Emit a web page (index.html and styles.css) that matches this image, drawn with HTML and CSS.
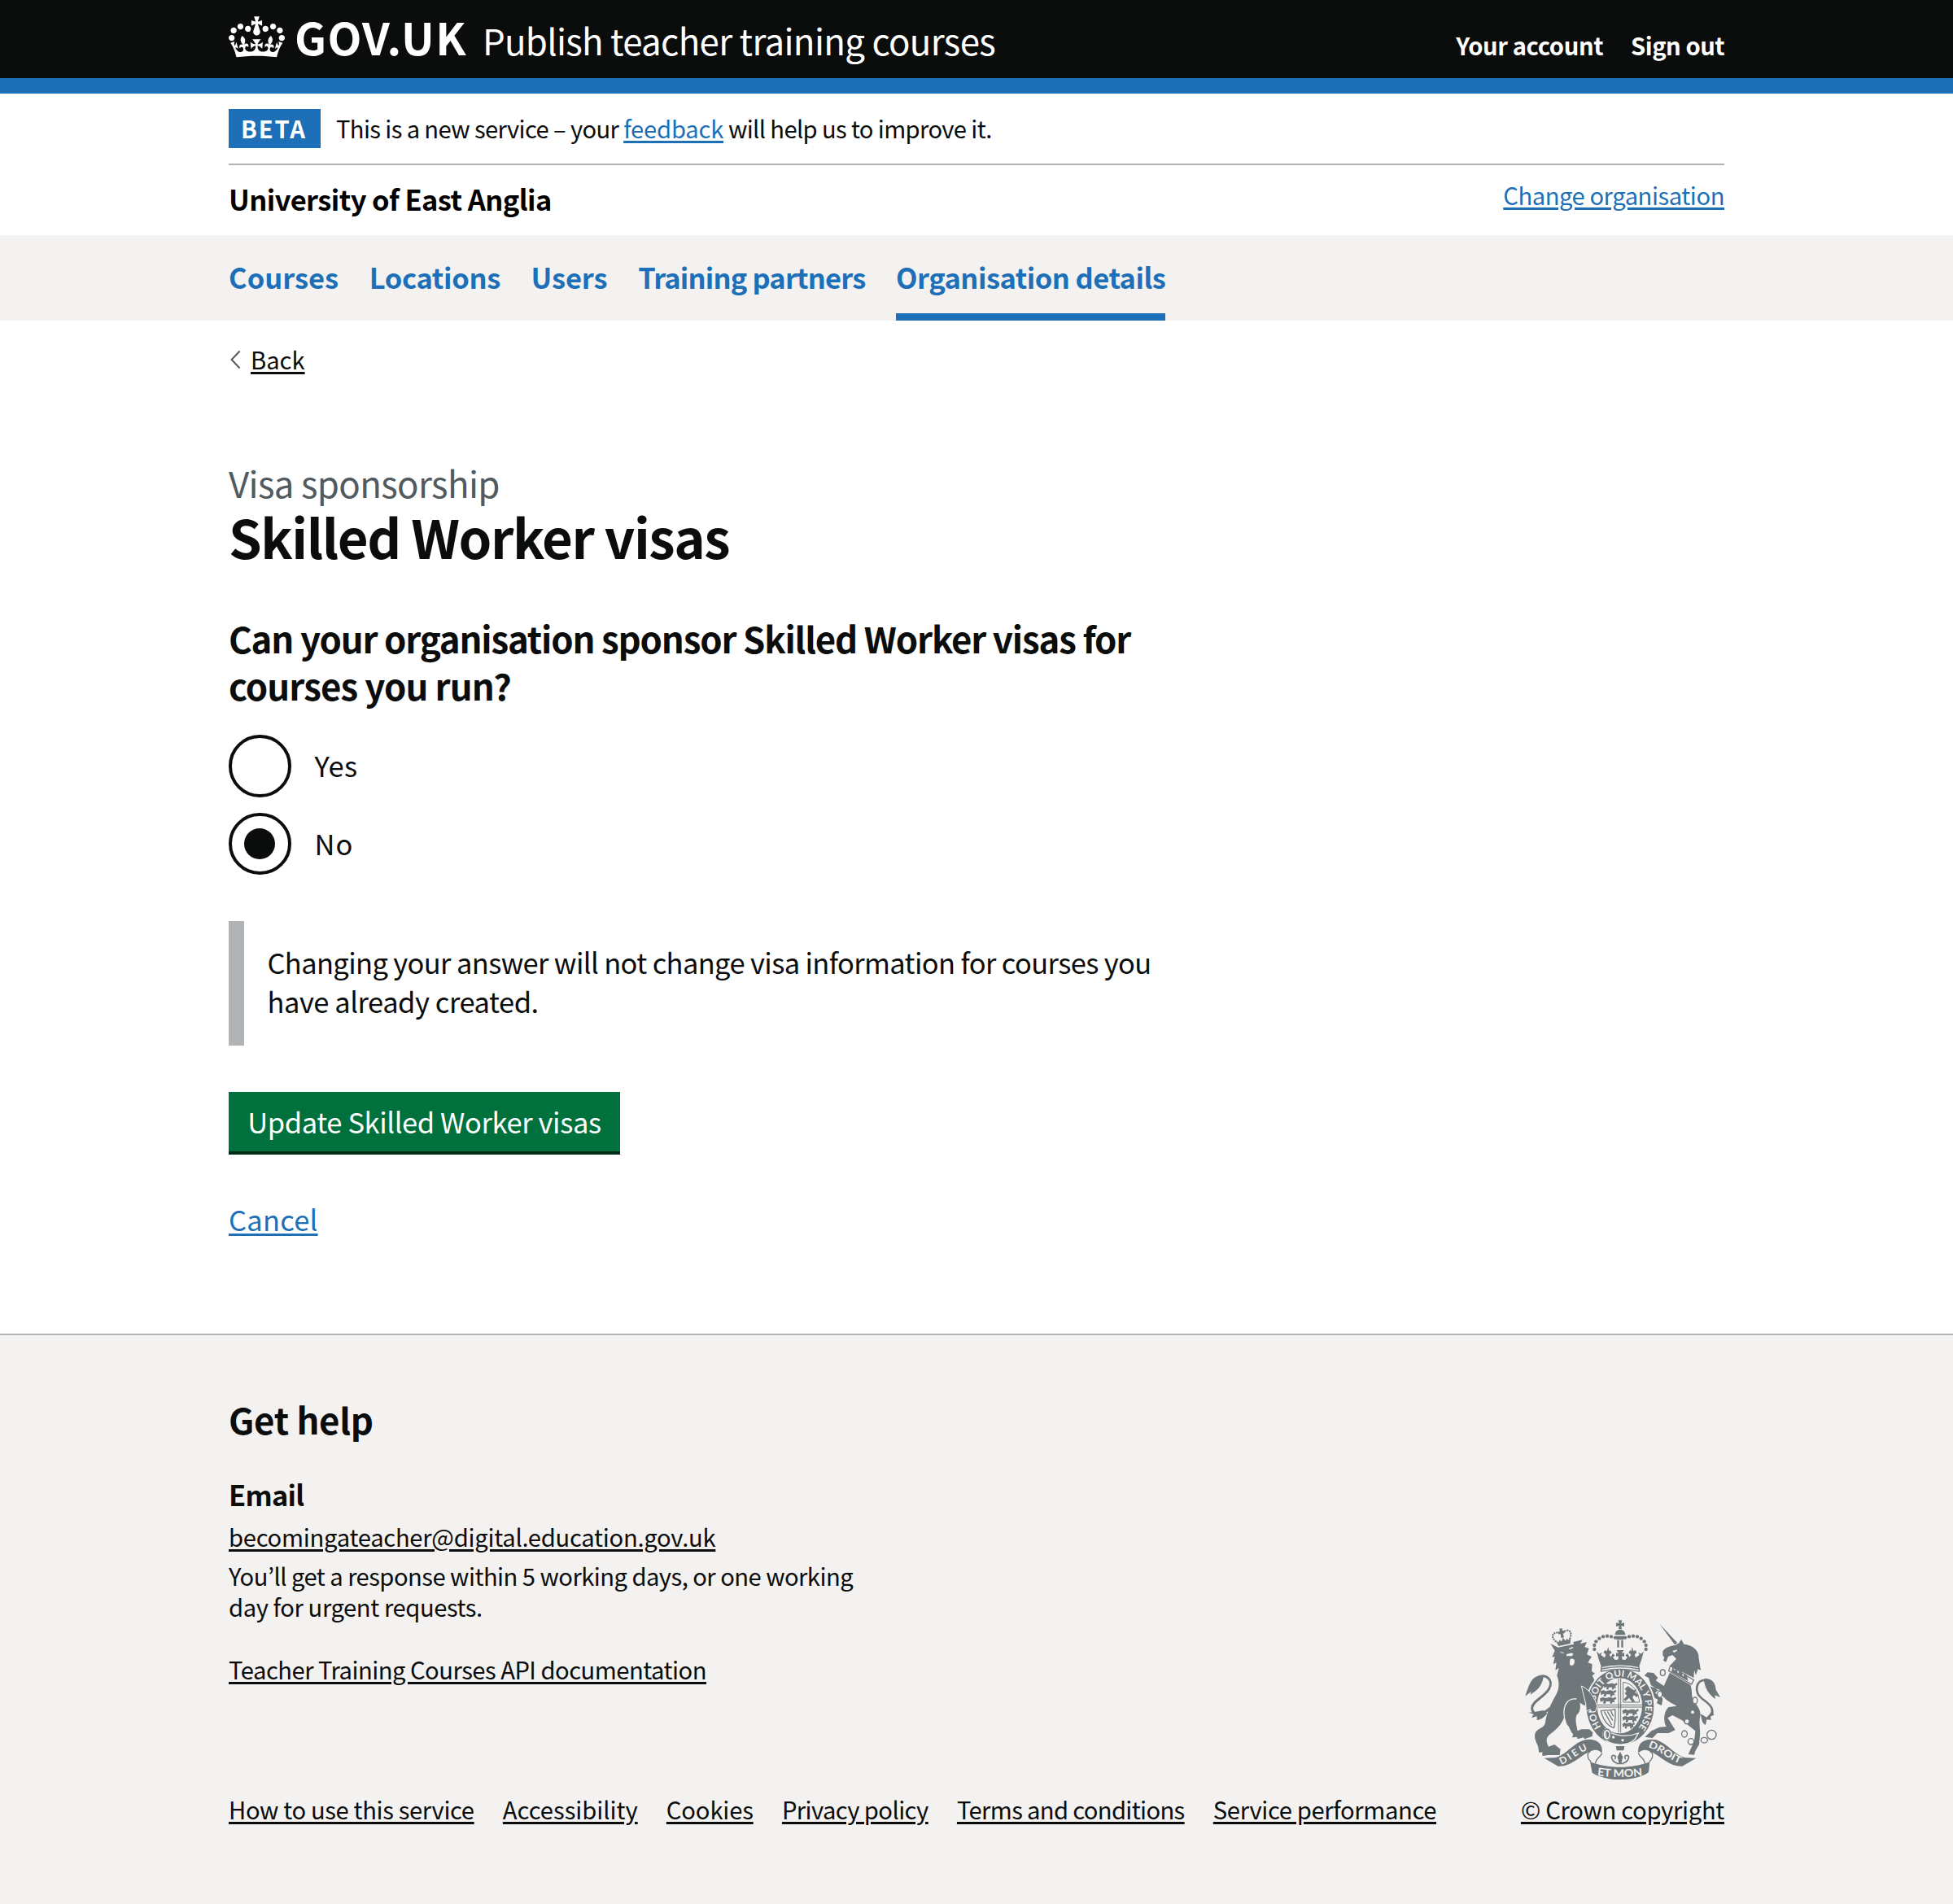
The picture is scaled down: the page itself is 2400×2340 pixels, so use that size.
FILE: index.html
```html
<!DOCTYPE html>
<html lang="en">
<head>
<meta charset="utf-8">
<title>Skilled Worker visas - Publish teacher training courses</title>
<link rel="stylesheet" href="styles.css">
</head>
<body>
<header class="header">
  <div class="container header-row">
    <svg class="crown" viewBox="0 0 132 97" aria-hidden="true"><path fill="#fff" d="M25 30.2c3.5 1.5 7.7-.2 9.1-3.7 1.5-3.6-.2-7.8-3.9-9.2-3.6-1.4-7.6.3-9.1 3.9-1.4 3.5.3 7.5 3.9 9zM9 39.5c3.6 1.5 7.8-.2 9.2-3.7 1.5-3.6-.2-7.8-3.9-9.1-3.6-1.5-7.6.2-9.1 3.8-1.4 3.5.3 7.5 3.8 9zM4.4 57.2c3.5 1.5 7.7-.2 9.1-3.8 1.5-3.6-.2-7.7-3.9-9.1-3.5-1.5-7.6.3-9.1 3.8-1.4 3.5.3 7.6 3.9 9.1zm38.3-21.4c3.5 1.5 7.7-.2 9.1-3.8 1.5-3.6-.2-7.7-3.9-9.1-3.6-1.5-7.6.3-9.1 3.8-1.3 3.6.4 7.7 3.9 9.1zm64.4-5.6c-3.6 1.5-7.8-.2-9.1-3.7-1.5-3.6.2-7.8 3.8-9.2 3.6-1.4 7.7.3 9.2 3.9 1.3 3.5-.4 7.5-3.9 9zm15.9 9.3c-3.6 1.5-7.7-.2-9.1-3.7-1.5-3.6.2-7.8 3.7-9.1 3.6-1.5 7.7.2 9.2 3.8 1.5 3.5-.3 7.5-3.8 9zm4.7 17.7c-3.6 1.5-7.8-.2-9.2-3.8-1.5-3.6.2-7.7 3.9-9.1 3.6-1.5 7.7.3 9.2 3.8 1.3 3.5-.4 7.6-3.9 9.1zM89.3 35.8c-3.6 1.5-7.8-.2-9.2-3.8-1.4-3.6.2-7.7 3.9-9.1 3.6-1.5 7.7.3 9.2 3.8 1.4 3.6-.3 7.7-3.9 9.1zM69.7 17.7l8.9 4.7V9.3l-8.9 2.8c-.2-.3-.5-.6-.9-.9L72.4 0H59.6l3.5 11.2c-.3.3-.6.5-.9.9l-8.8-2.8v13.1l8.8-4.7c.3.3.6.7.9.9l-5 15.4v.1c-.2.8-.4 1.6-.4 2.4 0 4.1 3.1 7.5 7 8.1h.2c.3 0 .7.1 1 .1.4 0 .7 0 1-.1h.2c4-.6 7.1-4.1 7.1-8.1 0-.8-.1-1.7-.4-2.4V34l-5.1-15.4c.4-.2.7-.6 1-.9zM66 92.8c16.9 0 32.8 1.1 47.1 3.2 4-16.9 8.9-26.7 14-33.5l-9.6-3.4c1 4.9 1.1 7.2 0 10.2-1.5-1.4-3-4.3-4.2-8.7L108.6 76c2.8-2 5-3.2 7.5-3.3-4.4 9.4-10 11.9-13.6 11.2-4.3-.8-6.3-4.6-5.6-7.9 1-4.7 5.7-5.9 8-.5 4.3-8.7-3-11.4-7.6-8.8 7.1-7.2 7.9-13.5 2.1-21.1-8 6.1-8.1 12.3-4.5 20.8-4.7-5.4-12.1-2.5-9.5 6.2 3.4-5.2 7.9-2 7.2 3.1-.6 4.3-6.4 7.8-13.5 7.2-10.3-.9-10.9-8-11.2-13.8 2.5-.5 7.1 1.8 11 7.3L80.2 60c-4.1 4.4-8 5.3-12.3 5.4 1.4-4.4 8-11.6 8-11.6H55.5s6.4 7.2 7.9 11.6c-4.2-.1-8-1-12.3-5.4l1.4 16.4c3.9-5.5 8.5-7.7 10.9-7.3-.3 5.8-.9 12.8-11.1 13.8-7.2.6-12.9-2.9-13.5-7.2-.7-5 3.8-8.3 7.1-3.1 2.7-8.7-4.6-11.6-9.4-6.2 3.7-8.5 3.6-14.7-4.6-20.8-5.8 7.6-5 13.9 2.2 21.1-4.7-2.6-11.9.1-7.7 8.8 2.3-5.5 7.1-4.2 8.1.5.7 3.3-1.3 7.1-5.7 7.9-3.5.7-9-1.8-13.5-11.2 2.5.1 4.7 1.3 7.5 3.3l-4.7-15.4c-1.2 4.4-2.7 7.2-4.3 8.7-1.1-3-.9-5.3 0-10.2l-9.5 3.4c5 6.9 9.9 16.7 14 33.5 14.8-2.1 30.8-3.2 47.7-3.2z"/></svg>
    <a class="logotype">GOV.UK</a>
    <a class="product">Publish teacher training courses</a>
    <nav class="account"><a class="your-account">Your account</a><a class="sign-out">Sign out</a></nav>
  </div>
</header>

<div class="container">
  <div class="phase">
    <strong class="tag">BETA</strong>
    <p class="phase-text">This is a new service – your <a class="link feedback">feedback</a><span class="phase-rest"> will help us to improve it.</span></p>
  </div>
  <div class="org">
    <p class="org-name">University of East Anglia</p>
    <a class="link change-org">Change organisation</a>
  </div>
</div>

<nav class="nav">
  <div class="container nav-row">
    <a class="nav-item courses">Courses</a>
    <a class="nav-item locations">Locations</a>
    <a class="nav-item users">Users</a>
    <a class="nav-item partners">Training partners</a>
    <a class="nav-item details current">Organisation details</a>
  </div>
</nav>

<main class="container main">
  <a class="back"><svg class="chevron" viewBox="0 0 14 24" aria-hidden="true"><path d="M12.6 1.5 2.6 12l10 10.500" fill="none" stroke="#505a5f" stroke-width="2"/></svg><span class="back-text">Back</span></a>
  <p class="caption">Visa sponsorship</p>
  <h1 class="title">Skilled Worker visas</h1>
  <h2 class="question"><span class="q1">Can your organisation sponsor Skilled Worker visas for</span><br><span class="q2">courses you run?</span></h2>
  <div class="radios">
    <label class="radio"><span class="ring"></span><span class="yes">Yes</span></label>
    <label class="radio"><span class="ring"><span class="dot"></span></span><span class="no">No</span></label>
  </div>
  <p class="inset"><span class="i1">Changing your answer will not change visa information for courses you</span><br><span class="i2">have already created.</span></p>
  <button class="button">Update Skilled Worker visas</button>
  <p class="cancel-row"><a class="link cancel">Cancel</a></p>
</main>

<footer class="footer">
  <div class="container footer-row">
    <div class="footer-main">
      <h2 class="help">Get help</h2>
      <h3 class="email">Email</h3>
      <p class="address"><a class="dark address-link">becomingateacher@digital.education.gov.uk</a></p>
      <p class="response"><span class="r1">You’ll get a response within 5 working days, or one working</span><br><span class="r2">day for urgent requests.</span></p>
      <p class="api"><a class="dark api-link">Teacher Training Courses API documentation</a></p>
      <div class="links">
        <a class="dark l-how">How to use this service</a>
        <a class="dark l-acc">Accessibility</a>
        <a class="dark l-cook">Cookies</a>
        <a class="dark l-priv">Privacy policy</a>
        <a class="dark l-terms">Terms and conditions</a>
        <a class="dark l-perf">Service performance</a>
      </div>
    </div>
    <div class="copyright">
      <svg class="crest" viewBox="72 60 720 594" aria-hidden="true">
        <defs>
          <path id="garter" d="M353 457A93 112 0 1 1 493 457"/>
          <path id="dieu" d="M206 596C240 584 268 552 316 536"/>
          <path id="mon" d="M338 636Q423 648 510 636"/>
          <path id="droit" d="M525 532C566 541 601 580 652 596"/>
          <path id="beast" d="M0 5l8-4 6 3 12-3 8 3 6-4 2 6-6 3 2 7-6-1-2 5-4-1 0-6-10 0-2 7-6-2 2-7-8 4z"/>
          <g id="crownhalf">
            <g class="d"><circle cx="404" cy="128" r="6"/><circle cx="390" cy="124" r="6.500"/><circle cx="375" cy="122" r="6.500"/><circle cx="360" cy="124" r="6.500"/><circle cx="346" cy="131" r="6.500"/><circle cx="334" cy="142" r="6.500"/><circle cx="328" cy="156" r="6.500"/><circle cx="328" cy="171" r="6.500"/></g>
            <path class="d" d="M424 232V208L404 210 396 200 404 194 396 186 388 200 383 190 392 184 386 174 382 178 379 162 374 178 366 174 362 184 370 190 366 202 352 192 356 182 346 188 336 178 344 208 354 236z"/>
          </g>
        </defs>
        <!-- lion -->
        <path class="s" stroke-width="9" d="M112 278C150 255 180 285 160 318C140 350 98 362 98 388C98 412 130 420 164 388"/>
        <path class="d" d="M140 274C98 258 88 300 73 344l22-18-3 12C118 322 136 304 140 274zM86 404l18 6-8 14 20-6 0 14c18-2 28-12 38-24l-14-12-34 6z"/>
        <path class="d" d="M166 150l16 26-10 24 10-2-6 28 12-6-4 28 13-8-7 28C198 290 200 312 188 336C170 368 152 402 147 440C146 458 122 462 113 474C102 490 112 512 120 528L124 552l12-2 0 14 22-3 42 0 3-22-22-17-22 8C150 512 148 500 162 486C188 466 212 445 217 416L226 446C240 462 240 476 250 484l-4 12 18-2 2 8 22-6 4 6 28-10 2-14-12-12-30 0-14 6C262 450 256 434 262 414C276 402 278 384 274 368l24 14 0 18 14-8 6 10 14-2 8-22-10-30-20-20 20-38-10-22 10-8-12-8 2-26-16-6 14-22-18-8 8-22-16-6 8-18L276 150 284 136 250 144 252 152 194 164z"/>
        <path class="l" stroke="none" d="M196 178l22 3-3 7-14-3zM232 166l22-8-4 10-16 6zM222 188l22-6 10 6-8 10-22 0zM236 208c6-8 20-6 21 6c0 20-18 24-22 12z"/>
        <path class="sl" stroke-width="4" d="M217 420C210 370 235 350 262 354"/>
        <g transform="rotate(-12 208 125)"><path class="d" d="M183 136l6 20h44l6-20-10 6-4-8-6 8-8-12-8 12-6-8-4 8zM205 94h10v10h7v9h-7v16h-10v-16h-7v-9h7z"/><g class="s" stroke-width="7" stroke-dasharray="0 9" stroke-linecap="round"><path d="M182 136C164 112 184 96 206 112"/><path d="M236 136C254 112 234 96 214 112"/></g></g>
        <!-- unicorn -->
        <path class="d" d="M567 76L634 148l-10 6zM626 156l14-8 8-14 10 18C690 154 714 178 712 198L720 248l-10-4-8 22-6-18-2 28L606 232l24-26-14-14-16 6-8 20-10-6 4-12-6-6 0-16C592 162 610 158 626 156z"/>
        <path class="l" stroke="none" d="M612 176l22-6 2 6-14 10z"/>
        <path class="l" d="M608 232L694 284l-8 16L602 250z"/>
        <path class="d" d="M612 254l4-18 8 14 6-8 6 18 8-12 6 6 4 18 8-12 6 6 6 22zM606 257L682 302C690 322 684 346 694 362C712 384 724 400 716 428C714 454 720 474 716 498l-2 24-14 24-4 14-22-2 12-26 10-22 4-38L650 432l-34-18-18 10 28 44-24 12-42 0-18 18-28-4 24-22 30-14 26-2C580 440 584 398 602 384l30-4C600 364 580 350 570 328L536 302l-8-26-16-8 12-12 22 2 16 18-8 10 30 20zM572 322l-42-16-6 20 10 16 28 14-4 14 18 8 4-26-28-20 8-8z"/>
        <path class="s" stroke-width="8" d="M740 284C700 282 694 330 726 354C764 380 776 400 744 426"/>
        <path class="d" d="M736 278C768 280 774 300 776 320l16 28-20-8 2 14C750 338 734 312 732 284zM766 396l2 18-12 4 2 14-16-2-4 20C722 444 724 422 718 408l24 14z"/>
        <g fill="none" stroke="#6f777b" stroke-width="4"><circle cx="760" cy="486" r="17"/><ellipse cx="733" cy="506" rx="12" ry="10"/><circle cx="684" cy="511" r="11"/><ellipse cx="660" cy="483" rx="10" ry="12"/><ellipse class="l" cx="580" cy="257" rx="9" ry="11"/><ellipse class="l" cx="569" cy="337" rx="9" ry="12"/><ellipse class="l" cx="699" cy="360" rx="9" ry="12"/></g>
        <g class="l" stroke="none"><circle cx="690" cy="403" r="8"/><circle cx="669" cy="437" r="9"/></g>
        <!-- garter and shield -->
        <ellipse cx="423" cy="383" rx="130" ry="143" class="lf"/>
        <ellipse cx="423" cy="383" rx="124" ry="140" class="d"/>
        <ellipse cx="421" cy="379" rx="85" ry="104" class="l" stroke-width="4"/>
        <path class="s" stroke-width="3" d="M417 278v200M425 278v200M338 376h166M338 384h166"/>
        <g class="d">
          <use href="#beast" transform="translate(362 294) scale(1.200 1.300)"/><use href="#beast" transform="translate(350 320) scale(1.400 1.300)"/><use href="#beast" transform="translate(348 346) scale(1.450 1.300)"/>
          <use href="#beast" transform="translate(431 390) scale(1.450 1.300)"/><use href="#beast" transform="translate(431 415) scale(1.400 1.300)"/><use href="#beast" transform="translate(431 440) scale(1.100 1.200)"/>
          <path d="M440 316l12-10 10 8 12 8 8-4-4 12 12 10-6 8-10-8-6 8 10 16-10 2-12-16-14 12-6-6 12-14-8-8 6-8z"/>
        </g>
        <path class="s" stroke-width="3" d="M434 292C470 296 492 330 494 366H434z"/>
        <path class="s" stroke-width="4" d="M352 398C370 392 380 400 404 392C408 420 404 440 400 460C376 454 360 430 352 398zM364 400l28 50M376 400l20 34M388 398l10 20"/>
        <text class="motto" font-size="34"><textPath href="#garter" textLength="484" lengthAdjust="spacingAndGlyphs">HONI SOIT QUI MAL Y PENSE</textPath></text>
        <path class="d" stroke="#f3f2f1" stroke-width="4" d="M368 466C400 492 450 496 490 480L478 502C450 530 400 526 372 508z"/>
        <g class="l" stroke="none"><circle cx="398" cy="495" r="7"/><circle cx="432" cy="506" r="7"/></g>
        <ellipse cx="374" cy="485" rx="12" ry="18" fill="none" stroke="#f3f2f1" stroke-width="9"/><ellipse cx="374" cy="485" rx="14" ry="20" fill="none" stroke="#6f777b" stroke-width="4"/>
        <path class="d" d="M407 528h32l-3 16h-26zM423 548l10 20-6 24h-8l-6-24z"/>
        <path class="s" stroke-width="5" d="M414 592C390 584 386 562 398 562C408 562 408 574 402 576M432 592C456 584 460 562 448 562C438 562 438 574 444 576M406 592h34"/>
        <path class="d" stroke="#f3f2f1" stroke-width="3" d="M280 306C304 316 318 336 330 358L338 380 332 400 318 402 312 392 298 400 296 372z"/>
        <!-- crown -->
        <path class="l" stroke-width="4" d="M360 228Q352 240 352 252Q423 236 494 252Q494 240 486 228z"/>
        <use href="#crownhalf"/><use href="#crownhalf" transform="matrix(-1 0 0 1 846 0)"/>
        <path class="l" stroke="none" d="M354 235Q423 220 492 235V243Q423 228 354 243z"/>
        <path class="d" d="M416 64h14l-3 12 11-3v14l-11-3 2 12h-12l2-12-11 3V73l11 3zM404 118C404 92 442 92 442 118zM404 122h38l-6 14h-26zM412 138h7v26h-7zM427 138h7v26h-7zM410 174h26l-7 12 9-2v14l-9-2 2 14h-16l2-14-9 2v-14l9 2z"/>
        <!-- ribbons -->
        <path class="d" d="M143 572L186 570C232 555 256 506 306 503C342 502 360 522 356 554C344 542 332 538 312 548C276 560 246 604 194 602z"/>
        <path class="d" d="M703 572L660 570C614 555 590 506 540 503C504 502 486 522 490 554C502 542 514 538 534 548C570 560 600 604 652 602z"/>
        <path class="d" d="M312 586C380 612 466 612 532 586L528 624C480 660 370 660 320 626z"/>
        <path class="s" stroke-width="4" d="M314 548C300 550 300 572 316 586M356 554C350 570 332 574 332 592M532 548C546 550 546 572 530 586M490 554C496 570 514 574 514 592"/>
        <text class="motto" font-size="36"><textPath href="#dieu" textLength="112">DIEU</textPath></text>
        <text class="motto" font-size="40"><textPath href="#mon" textLength="168" lengthAdjust="spacingAndGlyphs">ET MON</textPath></text>
        <text class="motto" font-size="36"><textPath href="#droit" textLength="132" lengthAdjust="spacingAndGlyphs">DROIT</textPath></text>
      </svg>
      <a class="dark l-copy">© Crown copyright</a>
    </div>
  </div>
</footer>
</body>
</html>
```
FILE: styles.css
```css
* { box-sizing: border-box; }
body {
  margin: 0;
  background: #fff;
  color: #0b0c0c;
  font-family: "Noto Sans CJK JP", "Noto Sans", sans-serif;
  font-size: 29.2px;
  line-height: 38px;
  white-space: nowrap;
}
p, h1, h2, h3 { margin: 0; }
.container { width: 1838px; margin: 0 auto; }
.link, .dark { text-decoration: underline; text-decoration-thickness: 2.6px; text-underline-offset: 2.5px; }
.link { color: #1d70b8; }
.dark { color: #0b0c0c; }

/* header */
.header { height: 115px; background: #0b0c0c; border-bottom: 19px solid #1d70b8; color: #fff; }
.header-row { display: flex; align-items: baseline; padding-top: 15px; }
.crown { width: 69px; height: 51px; align-self: flex-start; margin-top: 5px; }
.logotype { margin-left: 12px; font-size: 54.5px; line-height: 60px; font-weight: 700; letter-spacing: .0244em; }
.product { margin-left: 19px; font-size: 43.8px; line-height: 60px; letter-spacing: -.0158em; }
.account { margin-left: auto; display: flex; gap: 34px; font-weight: 700; }
.your-account { letter-spacing: -.0136em; }
.sign-out { letter-spacing: -.0176em; }

/* phase banner */
.phase { display: flex; align-items: flex-start; padding: 19px 0; border-bottom: 2px solid #b1b4b6; }
.tag { width: 113px; height: 48px; padding-left: 15px; background: #1d70b8; color: #fff; line-height: 46px; letter-spacing: .0638em; }
.phase-text { margin-left: 19px; line-height: 46px; letter-spacing: -.0215em; }
.feedback { letter-spacing: -.0074em; }
.phase-rest { letter-spacing: -.0218em; }
.org { display: flex; justify-content: space-between; height: 86px; }
.org-name { font-size: 34.5px; font-weight: 700; line-height: 82px; letter-spacing: -.017em; color: #000; }
.change-org { line-height: 73px; letter-spacing: -.0156em; }

/* primary navigation */
.nav { background: #f3f2f1; }
.nav-row { display: flex; gap: 37.600px; height: 105px; }
.nav-item { padding-top: 28px; font-size: 34.5px; line-height: 46px; font-weight: 700; color: #1d70b8; }
.current { border-bottom: 9px solid #1d70b8; }
.courses { letter-spacing: -.0002em; }
.locations { letter-spacing: -.0102em; }
.users { letter-spacing: -.0024em; }
.partners { letter-spacing: -.0244em; }
.details { letter-spacing: -.0152em; }

/* main content */
.main { height: 1245px; padding-top: 28px; }
.back { display: flex; align-items: center; height: 38px; }
.chevron { width: 14px; height: 24px; margin: 2px 0 0 1px; }
.back-text { margin-left: 12px; text-decoration: underline; text-decoration-thickness: 2.6px; text-underline-offset: 2.5px; }
.caption { margin-top: 104px; color: #505a5f; font-size: 43.8px; line-height: 58px; letter-spacing: -.0149em; }
.title { margin-top: 1px; font-size: 65.3px; line-height: 72px; font-weight: 700; letter-spacing: -.0225em; }
.question { margin-top: 61px; font-size: 43.8px; line-height: 57.5px; font-weight: 700; }
.q1 { letter-spacing: -.0271em; }
.q2 { letter-spacing: -.021em; }
.radios { display: flex; flex-direction: column; gap: 19px; margin-top: 32px; }
.radio { display: flex; height: 76.500px; font-size: 34.5px; line-height: 74px; }
.ring { width: 76.500px; height: 76.500px; margin-right: 29px; border: 4px solid #0b0c0c; border-radius: 50%; display: flex; align-items: center; justify-content: center; }
.dot { width: 38px; height: 38px; border-radius: 50%; background: #0b0c0c; }
.yes { letter-spacing: .0102em; }
.no { letter-spacing: .0318em; }
.inset { margin-top: 57px; height: 153px; padding: 26px 0 0 28.500px; border-left: 19px solid #b1b4b6; font-size: 34.5px; line-height: 48px; }
.i1 { letter-spacing: -.0185em; }
.i2 { letter-spacing: -.0135em; }
.button { display: block; width: 481px; height: 77px; margin-top: 57px; padding: 0 0 2px; border: 0; border-bottom: 4px solid #002d18; background: #00703c; color: #fff; font: 400 34.5px/70px "Noto Sans CJK JP", "Noto Sans", sans-serif; letter-spacing: -.0115em; }
.cancel-row { margin-top: 55px; font-size: 34.5px; line-height: 48px; }
.cancel { letter-spacing: .007em; }

/* footer */
.footer { height: 701px; border-top: 2px solid #b1b4b6; background: #f3f2f1; }
.footer-row { display: flex; justify-content: space-between; padding-top: 75px; }
.help { font-size: 43.8px; line-height: 57px; letter-spacing: -.0075em; }
.email { margin-top: 39px; font-size: 34.5px; line-height: 48px; letter-spacing: -.023em; }
.address { margin-top: 9px; }
.address-link { letter-spacing: -.0093em; }
.response { margin-top: 10px; line-height: 38.300px; }
.r1 { letter-spacing: -.0185em; }
.r2 { letter-spacing: -.0145em; }
.api { margin-top: 38px; }
.api-link { letter-spacing: -.0175em; }
.links { display: flex; gap: 35.200px; margin-top: 134px; }
.l-how { letter-spacing: -.0127em; }
.l-acc { letter-spacing: -.0011em; }
.l-cook { letter-spacing: -.0053em; }
.l-priv { letter-spacing: -.0202em; }
.l-terms { letter-spacing: -.0226em; }
.l-perf { letter-spacing: -.0127em; }
.copyright { display: flex; flex-direction: column; align-items: flex-end; justify-content: flex-end; }
.crest { width: 240px; height: 198px; margin: 0 5px 16px 0; }
.l-copy { letter-spacing: -.0107em; }
.d { fill: #6f777b; }
.l { fill: #f3f2f1; stroke: #6f777b; stroke-width: 4px; }
.lf { fill: #f3f2f1; }
.s { fill: none; stroke: #6f777b; }
.sl { fill: none; stroke: #f3f2f1; }
.motto { fill: #f3f2f1; font-family: Lato, sans-serif; font-weight: 700; }
```
